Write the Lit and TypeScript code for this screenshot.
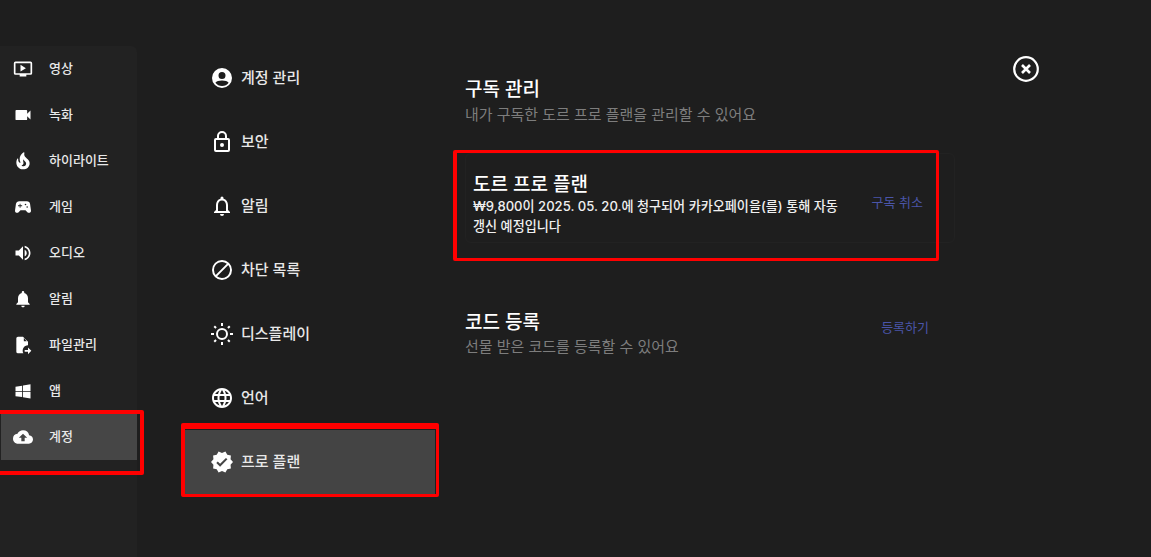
import { LitElement, html, css, svg } from "lit";
import { customElement } from "lit/decorators.js";

const I: Record<string, any> = {
  video: svg`<path d="M21 3H3a2 2 0 0 0-2 2v12a2 2 0 0 0 2 2h5v2h8v-2h5a2 2 0 0 0 2-2V5a2 2 0 0 0-2-2zm0 14H3V5h18v12zM15.500 11 9 15V7z"/>`,
  cam: svg`<path d="M17 10.500V7a1 1 0 0 0-1-1H4a1 1 0 0 0-1 1v10a1 1 0 0 0 1 1h12a1 1 0 0 0 1-1v-3.500l4 4v-11z"/>`,
  fire: svg`<path d="M19.480 12.350c-1.570-4.080-7.160-4.300-5.810-10.230.1-.44-.37-.78-.75-.55C9.290 3.710 6.680 8 8.870 13.620c.18.46-.36.89-.75.59-1.810-1.370-2-3.340-1.840-4.750.06-.52-.62-.77-.91-.34C4.690 10.160 4 11.840 4 14.370c.38 5.600 5.110 7.320 6.810 7.540 2.430.31 5.060-.14 6.950-1.870 2.080-1.930 2.840-5.010 1.720-7.690zm-9.280 5.030c1.440-.35 2.180-1.390 2.380-2.310.33-1.430-.96-2.830-.09-5.090.33 1.870 3.270 3.040 3.270 5.080.08 2.530-2.660 4.700-5.560 2.320z"/>`,
  pad: svg`<path d="m21.580 16.090-1.090-7.660A3.996 3.996 0 0 0 16.530 5H7.470C5.480 5 3.790 6.460 3.510 8.430l-1.090 7.660C2.200 17.630 3.390 19 4.940 19c.68 0 1.320-.27 1.800-.75L9 16h6l2.250 2.250c.48.480 1.130.750 1.800.750 1.560 0 2.750-1.370 2.530-2.910zM11 11H9v2H8v-2H6v-1h2V8h1v2h2v1zm4-1c-.55 0-1-.45-1-1s.45-1 1-1 1 .45 1 1-.45 1-1 1zm2 3c-.55 0-1-.45-1-1s.45-1 1-1 1 .45 1 1-.45 1-1 1z"/>`,
  vol: svg`<path d="M3 9v6h4l5 5V4L7 9H3zm13.500 3A4.500 4.500 0 0 0 14 7.970v8.050c1.480-.73 2.500-2.250 2.500-4.020zM14 3.230v2.060c2.890.86 5 3.540 5 6.710s-2.110 5.850-5 6.710v2.060c4.010-.91 7-4.490 7-8.770s-2.990-7.860-7-8.770z"/>`,
  bellF: svg`<path d="M12 22c1.100 0 2-.9 2-2h-4c0 1.100.9 2 2 2zm6-6v-5c0-3.070-1.630-5.640-4.500-6.320V4a1.500 1.500 0 0 0-3 0v.68C7.640 5.360 6 7.920 6 11v5l-2 2v1h16v-1l-2-2z"/>`,
  file: svg`<path fill-rule="evenodd" d="M6 2a2 2 0 0 0-2 2v16a2 2 0 0 0 2 2h6.500a6.500 6.500 0 0 1 5.500-9.800V8l-6-6H6zm7 1.500 3.500 4H13v-4zM18 15v3h-4v2h4v3l4-4z"/>`,
  win: svg`<path d="M3 12V6.750l8-1.100V12H3zm9-6.500L21 4v8h-9V5.500zM21 13v8l-9-1.500V13h9zM11 19.300l-8-1.050V13h8v6.300z"/>`,
  cloud: svg`<path d="M19.350 10.040A7.490 7.490 0 0 0 12 4C9.110 4 6.600 5.640 5.350 8.040A5.994 5.994 0 0 0 0 14c0 3.310 2.690 6 6 6h13c2.760 0 5-2.240 5-5 0-2.640-2.050-4.780-4.650-4.960zM14 13v4h-4v-4H7l5-5 5 5h-3z"/>`,
  user: svg`<path fill-rule="evenodd" d="M12 2a10 10 0 1 0 0 20 10 10 0 0 0 0-20zm0 4a3.500 3.500 0 1 1 0 7 3.500 3.500 0 0 1 0-7zm0 14c-2.700 0-5.100-1.300-6.600-3.300C6.300 15.200 9 14.500 12 14.500s5.700.7 6.600 2.200A8 8 0 0 1 12 20z"/>`,
  lock: svg`<path d="M18 8h-1V6a5 5 0 0 0-10 0v2H6a2 2 0 0 0-2 2v10a2 2 0 0 0 2 2h12a2 2 0 0 0 2-2V10a2 2 0 0 0-2-2zM9 6a3 3 0 0 1 6 0v2H9V6zm9 14H6V10h12v10zm-6-3a2 2 0 1 0 0-4 2 2 0 0 0 0 4z"/>`,
  bell: svg`<path d="M12 22a2 2 0 0 0 2-2h-4a2 2 0 0 0 2 2zm6-6v-5c0-3.070-1.640-5.640-4.500-6.320V4a1.500 1.500 0 0 0-3 0v.68C7.630 5.360 6 7.920 6 11v5l-2 2v1h16v-1l-2-2zm-2 1H8v-6c0-2.480 1.510-4.500 4-4.500s4 2.020 4 4.500v6z"/>`,
  block: svg`<path d="M12 2a10 10 0 1 0 0 20 10 10 0 0 0 0-20zM4 12a8 8 0 0 1 12.900-6.300L5.700 16.900A7.900 7.900 0 0 1 4 12zm8 8c-1.800 0-3.500-.6-4.900-1.700L18.300 7.100A8 8 0 0 1 12 20z"/>`,
  sun: svg`<path transform="translate(0 .5)" d="M6.760 4.840 4.960 3.050 3.550 4.460l1.790 1.790 1.420-1.410zM4 10.500H1v2h3v-2zm9-9.950h-2V3.500h2V.55zm7.450 3.910-1.410-1.410-1.790 1.790 1.410 1.410 1.790-1.790zm-3.210 13.700 1.790 1.800 1.410-1.410-1.800-1.790-1.400 1.400zM20 10.500v2h3v-2h-3zm-8-5a6 6 0 1 0 0 12 6 6 0 0 0 0-12zm0 10a4 4 0 1 1 0-8 4 4 0 0 1 0 8zm-1 6.950h2V19.500h-2v2.950zm-7.450-3.910 1.410 1.410 1.790-1.800-1.410-1.410-1.790 1.800z"/>`,
  globe: svg`<path d="M11.990 2C6.470 2 2 6.480 2 12s4.470 10 9.990 10C17.520 22 22 17.520 22 12S17.520 2 11.990 2zm6.930 6h-2.950a15.650 15.650 0 0 0-1.380-3.560A8.030 8.030 0 0 1 18.920 8zM12 4.040c.83 1.200 1.480 2.530 1.910 3.960h-3.820c.43-1.430 1.080-2.760 1.910-3.960zM4.260 14C4.100 13.360 4 12.690 4 12s.1-1.360.26-2h3.380c-.08.660-.14 1.320-.14 2s.06 1.340.14 2H4.260zm.82 2h2.950c.32 1.250.78 2.450 1.380 3.560A7.987 7.987 0 0 1 5.080 16zm2.950-8H5.080a7.987 7.987 0 0 1 4.330-3.560A15.650 15.650 0 0 0 8.030 8zM12 19.960c-.83-1.200-1.480-2.530-1.910-3.960h3.820c-.43 1.430-1.080 2.760-1.910 3.960zM14.340 14H9.660c-.09-.66-.16-1.320-.16-2s.07-1.350.16-2h4.680c.09.650.16 1.320.16 2s-.07 1.340-.16 2zm.25 5.560c.6-1.110 1.060-2.310 1.380-3.560h2.950a8.030 8.030 0 0 1-4.330 3.560zM16.360 14c.08-.66.14-1.320.14-2s-.06-1.340-.14-2h3.380c.16.640.26 1.310.26 2s-.1 1.360-.26 2h-3.380z"/>`,
  verified: svg`<path d="m23 12-2.440-2.790.34-3.690-3.610-.82-1.890-3.200L12 2.960 8.600 1.500 6.710 4.690 3.100 5.500l.34 3.700L1 12l2.440 2.790-.34 3.700 3.610.82L8.600 22.500l3.400-1.470 3.400 1.460 1.890-3.190 3.610-.82-.34-3.690L23 12zm-12.910 4.720-3.800-3.810 1.480-1.480 2.320 2.330 5.850-5.870 1.480 1.480-7.330 7.350z"/>`,
};

const icon = (n: string) => html`<svg class="ic" viewBox="0 0 24 24" fill="currentColor">${I[n]}</svg>`;

const rail = [
  ["video", "영상"], ["cam", "녹화"], ["fire", "하이라이트"], ["pad", "게임"], ["vol", "오디오"],
  ["bellF", "알림"], ["file", "파일관리"], ["win", "앱"], ["cloud", "계정"],
];
const sub = [
  ["user", "계정 관리"], ["lock", "보안"], ["bell", "알림"], ["block", "차단 목록"],
  ["sun", "디스플레이"], ["globe", "언어"], ["verified", "프로 플랜"],
];

@customElement("app-root")
export class AppRoot extends LitElement {
  static styles = css`
    :host { display: block; width: 1151px; height: 557px; overflow: hidden; position: relative;
      background: #1e1e1e; color: #fff;
      font-family: Inter, "Noto Sans CJK KR", sans-serif; }
    .page { display: flex; height: 557px; }
    .rail { width: 137px; margin-top: 46px; background: #222222; border-radius: 0 6px 0 0; flex: none; }
    .r { height: 46px; display: flex; align-items: center; gap: 16px; padding-left: 13px; font-size: 13px; font-weight: 500; color: #e8e8e8; }
    .r .ic { width: 20px; height: 20px; flex: none; color: #fff; }
    .r.on { background: #464646; margin-left: 1px; padding-left: 12px; }
    .r span { position: relative; top: -2px; }
    .nav { width: 250px; margin: 46px 0 0 48px; flex: none; }
    .n { height: 64px; display: flex; align-items: center; gap: 7px; padding-left: 25px; font-size: 15px; font-weight: 500; color: #e8e8e8; }
    .n .ic { width: 24px; height: 24px; flex: none; color: #fff; }
    .n span { position: relative; top: -2px; }
    .n.on { background: #444444; }
    .main { width: 465px; margin-left: 30px; padding-top: 76px; flex: none; }
    h2 { margin: 0; font-size: 19px; line-height: 28px; font-weight: 500; color: #fff; }
    p { margin: 0; font-size: 14.980px; line-height: 22px; color: #7d7d7d; }
    .card { margin: 27px 0 0 0; height: 90px; width: 490px; box-sizing: border-box; border: 1px solid #222; border-radius: 6px; padding: 19px 31px 0 7px; display: flex; align-items: flex-start; }
    .card .t { width: 372px; flex: none; }
    .card h3 { margin: 0; font-size: 19px; line-height: 24px; font-weight: 500; }
    .card .d { font-size: 13.100px; line-height: 19.500px; color: #f0f0f0; font-weight: 500; word-break: keep-all; }
    .link { font-size: 13px; color: #4a55a8; white-space: nowrap; }
    .card .link { margin: 19px 0 0 auto; }
    .code { margin-top: 66px; display: flex; justify-content: space-between; width: 464px; }
    .code .link { margin-top: 8px; }
    .code p { margin-top: -1px; }
    .close { position: absolute; left: 1013px; top: 56px; width: 26px; height: 26px; }
    .mark { position: absolute; border: 3px solid #ff0000; border-radius: 2px; box-sizing: border-box; pointer-events: none; }
    .m1 { left: -6px; top: 410px; width: 150px; height: 65px; border-width: 4px; }
    .m2 { left: 181px; top: 423px; width: 258px; height: 74px; border-width: 6px 3px 3px 4px; }
    .m3 { left: 453px; top: 150px; width: 486px; height: 111px; border-left-width: 4px; }
  `;

  render() {
    return html`
      <div class="page">
        <div class="rail">
          ${rail.map(([i, t]) => html`<div class="r ${t === "계정" ? "on" : ""}">${icon(i)}<span>${t}</span></div>`)}
        </div>
        <div class="nav">
          ${sub.map(([i, t]) => html`<div class="n ${t === "프로 플랜" ? "on" : ""}">${icon(i)}<span>${t}</span></div>`)}
        </div>
        <div class="main">
          <h2>구독 관리</h2>
          <p>내가 구독한 도르 프로 플랜을 관리할 수 있어요</p>
          <div class="card">
            <div class="t">
              <h3>도르 프로 플랜</h3>
              <div class="d">₩9,800이 2025. 05. 20.에 청구되어 카카오페이을(를) 통해 자동 갱신 예정입니다</div>
            </div>
            <span class="link">구독 취소</span>
          </div>
          <div class="code">
            <div><h2>코드 등록</h2><p>선물 받은 코드를 등록할 수 있어요</p></div>
            <span class="link">등록하기</span>
          </div>
        </div>
      </div>
      <svg class="close" viewBox="0 0 26 26" fill="none" stroke="#fff">
        <circle cx="13" cy="13" r="11.800" stroke-width="2.200"/>
        <path d="M9 9l8 8M17 9l-8 8" stroke-width="2.600"/>
      </svg>
      <div class="mark m1"></div><div class="mark m2"></div><div class="mark m3"></div>
    `;
  }
}
